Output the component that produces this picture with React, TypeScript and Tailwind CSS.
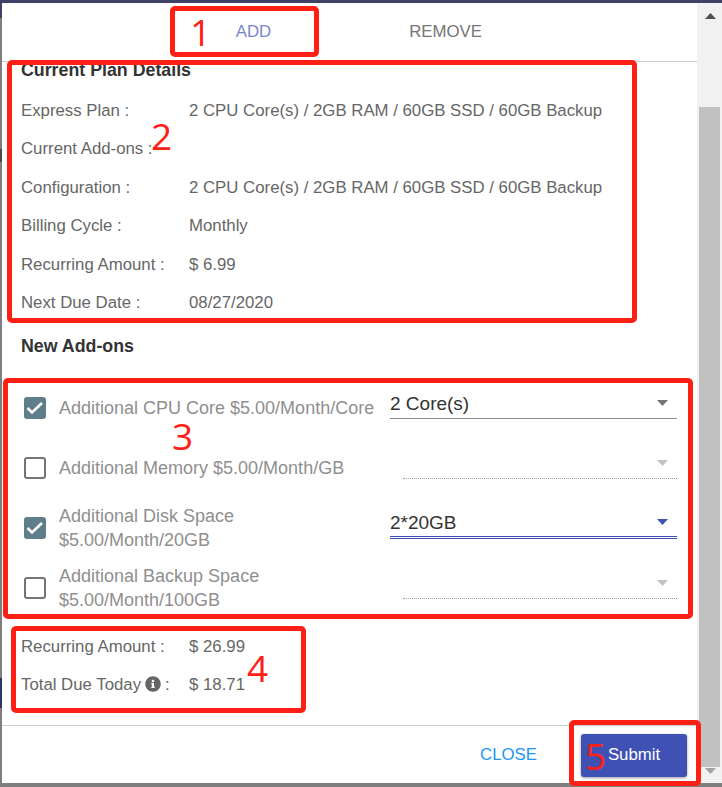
import React from 'react';
import { FaInfoCircle } from 'react-icons/fa';

const planRows = [
  { label: 'Express Plan :', value: '2 CPU Core(s) / 2GB RAM / 60GB SSD / 60GB Backup' },
  { label: 'Current Add-ons :', value: '' },
  { label: 'Configuration :', value: '2 CPU Core(s) / 2GB RAM / 60GB SSD / 60GB Backup' },
  { label: 'Billing Cycle :', value: 'Monthly' },
  { label: 'Recurring Amount :', value: '$ 6.99' },
  { label: 'Next Due Date :', value: '08/27/2020' },
];

const addons = [
  { lines: ['Additional CPU Core $5.00/Month/Core'], checked: true, value: '2 Core(s)', focused: false },
  { lines: ['Additional Memory $5.00/Month/GB'], checked: false, value: '', focused: false },
  { lines: ['Additional Disk Space', '$5.00/Month/20GB'], checked: true, value: '2*20GB', focused: true },
  { lines: ['Additional Backup Space', '$5.00/Month/100GB'], checked: false, value: '', focused: false },
];

function Caret({ className }: { className: string }) {
  return (
    <svg viewBox="0 0 11 6" className={`w-[11px] h-[6px] ${className}`}>
      <path d="M0 0h11L5.5 6z" fill="currentColor" />
    </svg>
  );
}

function Checkbox({ checked }: { checked: boolean }) {
  if (checked) {
    return (
      <div className="w-[22px] h-[22px] shrink-0 rounded-[3px] bg-[#607d8b] flex items-center justify-center">
        <svg viewBox="0 0 22 22" className="w-[22px] h-[22px]">
          <path d="M3.5 11l4.5 4.5L18 6" fill="none" stroke="#fff" strokeWidth="2.6" />
        </svg>
      </div>
    );
  }
  return <div className="w-[22px] h-[22px] shrink-0 rounded-[3px] border-2 border-[#757575] bg-white" />;
}

function AddonSelect({ value, focused }: { value: string; focused: boolean }) {
  if (!value) {
    return (
      <div className="ml-auto mt-[10px] w-[274px] h-[31px] flex items-center justify-end pr-[9px] border-b border-dotted border-[#9e9e9e]">
        <Caret className="text-[#c4c4c4]" />
      </div>
    );
  }
  return (
    <div
      className={`ml-auto mt-[10px] w-[287px] h-[31px] flex items-center justify-between pr-[9px] text-[19px] text-[#333333] ${
        focused ? 'border-b-[3px] border-double border-[#3f51b5]' : 'border-b border-[#8c8c8c]'
      }`}
    >
      <span className="mt-[2px]">{value}</span>
      <Caret className={focused ? 'text-[#3f51b5]' : 'text-[#757575]'} />
    </div>
  );
}

function Marker({ className, num, numClass }: { className: string; num: string; numClass: string }) {
  return (
    <>
      <div className={`absolute border-[5px] border-[#ff2015] rounded-[5px] pointer-events-none ${className}`} />
      <span className={`absolute font-['Open_Sans',sans-serif] font-normal text-[37px] leading-none text-[#ff2015] ${numClass}`}>
        {num}
      </span>
    </>
  );
}

export default function App() {
  return (
    <div className="relative w-[722px] h-[787px] overflow-hidden bg-[#7f7f7f] font-['Liberation_Sans',Arial,sans-serif] text-[16.8px] flex flex-col">
      <div className="h-[3px] shrink-0 bg-[#3d4266]" />
      <div className="flex h-[780px] shrink-0">
        <div className="w-[2px] shrink-0 flex flex-col">
          <div className="h-[15px] bg-[#3d4266]" />
          <div className="h-[131px]" />
          <div className="h-[13px] bg-[#4a4a4a]" />
          <div className="h-[516px]" />
          <div className="h-[30px] bg-[#2f3560]" />
        </div>

        <div className="flex-1 min-w-0 bg-white flex flex-col">
          <div className="h-[59px] shrink-0 flex justify-center border-b border-[#cccccc]">
            <div className="w-[192px] flex items-center justify-center text-[#7986cb] border-b-2 border-[#3f51b5] -mb-px">ADD</div>
            <div className="w-[192px] flex items-center justify-center text-[#757575]">REMOVE</div>
          </div>

          <div className="flex-1 min-h-0 px-[19px] flex flex-col">
            <div className="h-[16px] flex items-center font-bold text-[17.8px] text-[#333333]">Current Plan Details</div>
            <div className="mt-[13.4px]">
              {planRows.map((row) => (
                <div key={row.label} className="h-[38.4px] flex items-center text-[#666666]">
                  <span className="w-[168px] shrink-0">{row.label}</span>
                  <span>{row.value}</span>
                </div>
              ))}
            </div>

            <div className="mt-[12.6px] h-[24px] flex items-center font-bold text-[17.8px] text-[#333333]">New Add-ons</div>

            <div className="mt-[20px]">
              {addons.map((addon) => (
                <div key={addon.lines[0]} className="h-[60px] flex pl-[3px] pr-px">
                  <div className="flex items-center h-[60px]">
                    <Checkbox checked={addon.checked} />
                  </div>
                  <div className="ml-[13px] flex flex-col justify-center text-[18px] text-[#8f8f8f] leading-[24px] whitespace-nowrap">
                    {addon.lines.map((line) => (
                      <div key={line}>{line}</div>
                    ))}
                  </div>
                  <AddonSelect value={addon.value} focused={addon.focused} />
                </div>
              ))}
            </div>

            <div className="mt-[9px] text-[#666666]">
              <div className="h-[38px] flex items-center">
                <span className="w-[168px] shrink-0">Recurring Amount :</span>
                <span>$ 26.99</span>
              </div>
              <div className="h-[38px] flex items-center">
                <span className="w-[168px] shrink-0 flex items-center gap-[4px]">
                  Total Due Today <FaInfoCircle className="w-[16px] h-[16px] text-[#666666]" /> :
                </span>
                <span>$ 18.71</span>
              </div>
            </div>
          </div>

          <div className="h-[58px] shrink-0 border-t border-[#cccccc] flex items-center justify-end pr-[10px]">
            <button className="text-[#2196f3] mr-[44px]">CLOSE</button>
            <button className="w-[106px] h-[43px] mt-[1px] rounded-[3px] bg-[#3f51b5] text-white shadow-[0_1px_3px_rgba(0,0,0,0.4)]">
              Submit
            </button>
          </div>
        </div>

        <div className="w-[25px] shrink-0 bg-[#f1f1f1] flex flex-col">
          <div className="h-[104px] pt-[10px] flex justify-center pl-[1px]">
            <svg viewBox="0 0 11 6" className="w-[11px] h-[6px] text-[#505050]">
              <path d="M5.5 0L11 6H0z" fill="currentColor" />
            </svg>
          </div>
          <div className="h-[660px] ml-[2px] w-[21px] bg-[#c1c1c1]" />
          <div className="pt-[1px] flex justify-center pl-[1px]">
            <Caret className="text-[#a3a3a3]" />
          </div>
        </div>
      </div>

      <Marker className="left-[170px] top-[6px] w-[149px] h-[51px]" num="1" numClass="left-[190px] top-[13px]" />
      <Marker className="left-[7px] top-[60px] w-[630px] h-[263px]" num="2" numClass="left-[151px] top-[117px]" />
      <Marker className="left-[3px] top-[378px] w-[690px] h-[241px]" num="3" numClass="left-[172px] top-[417px]" />
      <Marker className="left-[11px] top-[626px] w-[295px] h-[87px]" num="4" numClass="left-[247px] top-[649px]" />
      <Marker className="left-[569px] top-[720px] w-[132px] h-[66px]" num="5" numClass="left-[585px] top-[737px]" />
    </div>
  );
}
